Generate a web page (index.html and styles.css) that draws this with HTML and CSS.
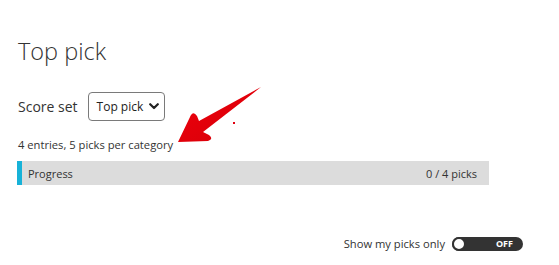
FILE: index.html
```html
<!DOCTYPE html>
<html lang="en">
<head>
  <meta charset="UTF-8">
  <title>Top pick</title>
  <link rel="stylesheet" href="styles.css">
</head>
<body>

  <div class="page">
    <h1 class="title">Top pick</h1>

    <div class="score-row">
      <label class="score-label">Score set</label>
      <div class="select">
        <span>Top pick</span>
        <svg class="chevron" width="10" height="7" viewBox="0 0 10 7">
          <path d="M1.2 1.2 L5 5 L8.8 1.2" fill="none" stroke="#222" stroke-width="2.2" stroke-linecap="round" stroke-linejoin="round"/>
        </svg>
      </div>
    </div>

    <p class="entries">4 entries, 5 picks per category</p>

    <div class="progress">
      <span>Progress</span>
      <span>0 / 4 picks</span>
    </div>

    <div class="toggle-row">
      <span>Show my picks only</span>
      <div class="toggle">
        <div class="knob"></div>
        <span class="toggle-text">OFF</span>
      </div>
    </div>
  </div>

  <!-- annotation arrow -->
  <svg class="arrow" width="559" height="265" viewBox="0 0 559 265">
    <defs>
      <linearGradient id="red" x1="0" y1="0" x2="1" y2="1">
        <stop offset="0" stop-color="#f0000c"/>
        <stop offset="1" stop-color="#d40008"/>
      </linearGradient>
    </defs>
    <path d="M178 142 L190 117 Q193 110 197 116 L199 121 L261 87 L203 132 L209 135 Q214 139 208 141 Z" fill="url(#red)"/>
    <rect x="233" y="122" width="2" height="2" fill="#e00010"/>
  </svg>

</body>
</html>
```

FILE: styles.css
```css
body {
  margin: 0;
  font-family: "Open Sans", sans-serif;
  color: #333;
  background: #fff;
}

.page {
  padding: 0 70px 0 18px;
}

.title {
  margin: 0;
  padding-top: 34px;
  font-size: 23.5px;
  font-weight: 300;
  line-height: 34px;
  color: #333;
}

.score-row {
  display: flex;
  align-items: center;
  gap: 10px;
  margin-top: 24px;
}

.score-label {
  font-size: 14px;
}

.select {
  display: flex;
  align-items: center;
  gap: 6px;
  height: 27px;
  padding: 0 5px 0 8px;
  border: 1px solid #7a7a7a;
  border-radius: 4px;
  font-size: 12px;
  color: #222;
}

.entries {
  margin: 16px 0 0;
  font-size: 11.2px;
  line-height: 16px;
}

.progress {
  display: flex;
  justify-content: space-between;
  align-items: center;
  height: 24px;
  margin: 8px 0 0 -1px;
  padding: 0 12px 0 6px;
  background: #dcdcdc;
  border-left: 5px solid #17b2d8;
  font-size: 11px;
  color: #333;
}

.toggle-row {
  display: flex;
  justify-content: flex-end;
  align-items: center;
  gap: 7px;
  margin: 51px -34px 0 0;
  font-size: 11.2px;
}

.toggle {
  position: relative;
  display: flex;
  align-items: center;
  justify-content: flex-end;
  width: 71px;
  height: 14px;
  border-radius: 7px;
  background: #333;
}

.knob {
  position: absolute;
  left: 0;
  top: 0;
  width: 10px;
  height: 10px;
  border: 2px solid #333;
  border-radius: 50%;
  background: #fff;
}

.toggle-text {
  padding-right: 10px;
  font-size: 9px;
  font-weight: bold;
  color: #fff;
}

.arrow {
  position: absolute;
  left: 0;
  top: 0;
  pointer-events: none;
}
```
